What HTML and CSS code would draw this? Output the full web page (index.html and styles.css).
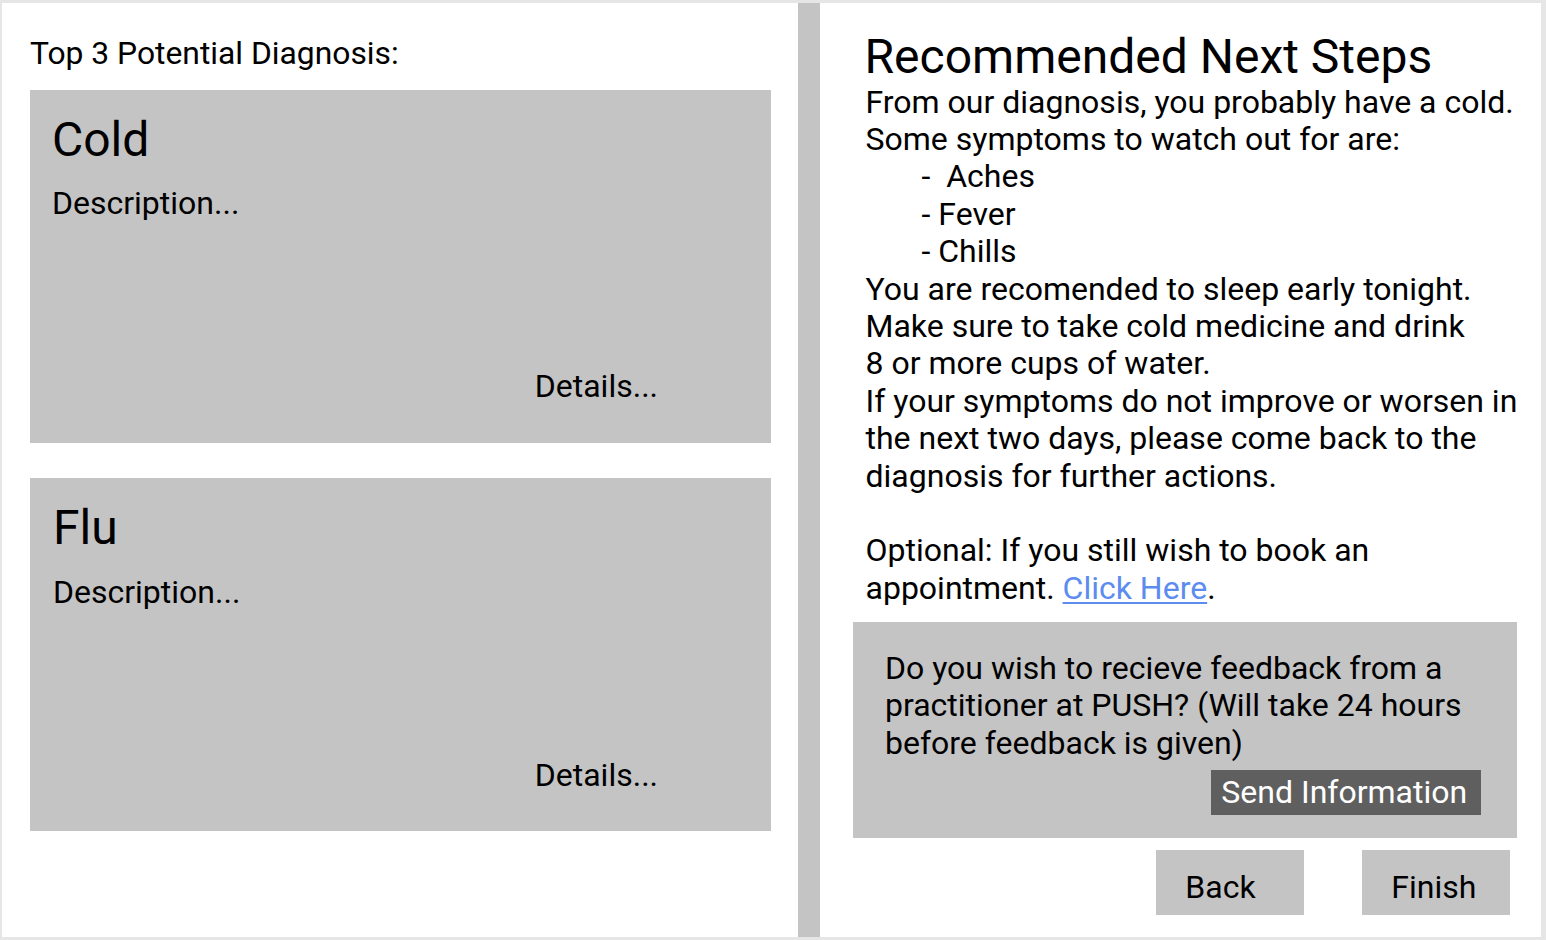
FILE: index.html
```html
<!DOCTYPE html>
<html lang="en">
<head>
<meta charset="utf-8">
<title>Recommended Next Steps</title>
<link rel="stylesheet" href="styles.css">
</head>
<body>
<div class="frame">
  <section class="left">
    <div class="left-title">Top 3 Potential Diagnosis:</div>
    <div class="card">
      <div class="card-title">Cold</div>
      <div class="card-desc">Description...</div>
      <div class="card-details">Details...</div>
    </div>
    <div class="card card-second">
      <div class="card-title">Flu</div>
      <div class="card-desc">Description...</div>
      <div class="card-details">Details...</div>
    </div>
  </section>
  <div class="divider"></div>
  <section class="right">
    <div class="steps">
      <h1 class="steps-title">Recommended Next Steps</h1>
      <div class="line">From our diagnosis, you probably have a cold.</div>
      <div class="line">Some symptoms to watch out for are:</div>
      <div class="line item">-  Aches</div>
      <div class="line item">- Fever</div>
      <div class="line item">- Chills</div>
      <div class="line">You are recomended to sleep early tonight.</div>
      <div class="line">Make sure to take cold medicine and drink</div>
      <div class="line">8 or more cups of water.</div>
      <div class="line">If your symptoms do not improve or worsen in</div>
      <div class="line">the next two days, please come back to the</div>
      <div class="line">diagnosis for further actions.</div>
      <div class="line blank"></div>
      <div class="line">Optional: If you still wish to book an</div>
      <div class="line">appointment. <a class="link" href="#">Click Here</a>.</div>
    </div>
    <div class="feedback">
      <p class="feedback-text">Do you wish to recieve feedback from a practitioner at PUSH? (Will take 24 hours before feedback is given)</p>
      <button class="send-btn" type="button">Send Information</button>
    </div>
    <div class="nav">
      <button class="nav-btn" type="button">Back</button>
      <button class="nav-btn" type="button">Finish</button>
    </div>
  </section>
</div>
</body>
</html>
```

FILE: styles.css
```css
* {
  box-sizing: border-box;
}

html, body {
  margin: 0;
  padding: 0;
}

body {
  width: 1546px;
  height: 940px;
  overflow: hidden;
  font-family: Roboto, "Liberation Sans", sans-serif;
  color: #000;
  background: #e6e6e6;
}

.frame {
  display: flex;
  width: 1546px;
  height: 940px;
  padding: 3px 5px 3px 2px;
  background: #e6e6e6;
}

.left {
  width: 796px;
  flex: none;
  background: #fff;
  padding: 32px 27px 0 28px;
  display: flex;
  flex-direction: column;
}

.left-title {
  font-size: 31.8px;
  line-height: 37px;
  margin-bottom: 18px;
}

.card {
  height: 353px;
  background: #c4c4c4;
  padding: 21.6px 21px 36.5px 22px;
  display: flex;
  flex-direction: column;
}

.card-second {
  margin-top: 35px;
  padding-left: 23px;
}

.card-title {
  font-size: 48px;
  line-height: 56px;
}

.card-desc {
  font-size: 32px;
  line-height: 37.4px;
  margin-top: 17.5px;
}

.card-second .card-desc {
  margin-top: 18.5px;
}

.card-details {
  margin-top: auto;
  align-self: flex-end;
  margin-right: 92px;
  font-size: 32px;
  line-height: 37.4px;
  position: relative;
  top: -1px;
}

.card-second .card-details {
  top: 0;
}

.divider {
  width: 22px;
  flex: none;
  background: #c4c4c4;
}

.right {
  flex: 1;
  background: #fff;
  padding: 28px 24px 0 33px;
  display: flex;
  flex-direction: column;
}

.steps {
  padding-left: 12.5px;
  font-size: 32px;
  line-height: 37.4px;
}

.steps-title {
  margin: 0;
  font-weight: 400;
  font-size: 48px;
  line-height: 52.5px;
  margin-left: -1px;
}

.line {
  white-space: pre;
  height: 37.42px;
}

.item {
  padding-left: 56px;
}

.link {
  color: #5c8cf0;
  text-decoration: underline;
  text-decoration-thickness: 1.5px;
  text-underline-offset: 3px;
}

.feedback {
  margin-top: 14.5px;
  background: #c4c4c4;
  padding: 28px 36px 23px 32px;
  display: flex;
  flex-direction: column;
  align-items: flex-end;
}

.feedback-text {
  margin: 0;
  align-self: stretch;
  font-size: 32px;
  line-height: 37.4px;
}

.send-btn {
  margin-top: 8.4px;
  height: 45px;
  width: 270px;
  border: none;
  background: #5f5f5f;
  color: #fff;
  font-family: Roboto, "Liberation Sans", sans-serif;
  font-size: 32px;
  line-height: 37.4px;
  padding: 0 0 0 10px;
  text-align: left;
  cursor: pointer;
}

.nav {
  margin-top: 12px;
  display: flex;
  justify-content: flex-end;
  gap: 58px;
  padding-right: 7px;
}

.nav-btn {
  width: 148px;
  height: 65px;
  border: none;
  background: #c4c4c4;
  color: #000;
  font-family: Roboto, "Liberation Sans", sans-serif;
  font-size: 32px;
  line-height: 37.4px;
  padding: 19px 0 0 29px;
  text-align: left;
  display: flex;
  align-items: flex-start;
  cursor: pointer;
}
```
